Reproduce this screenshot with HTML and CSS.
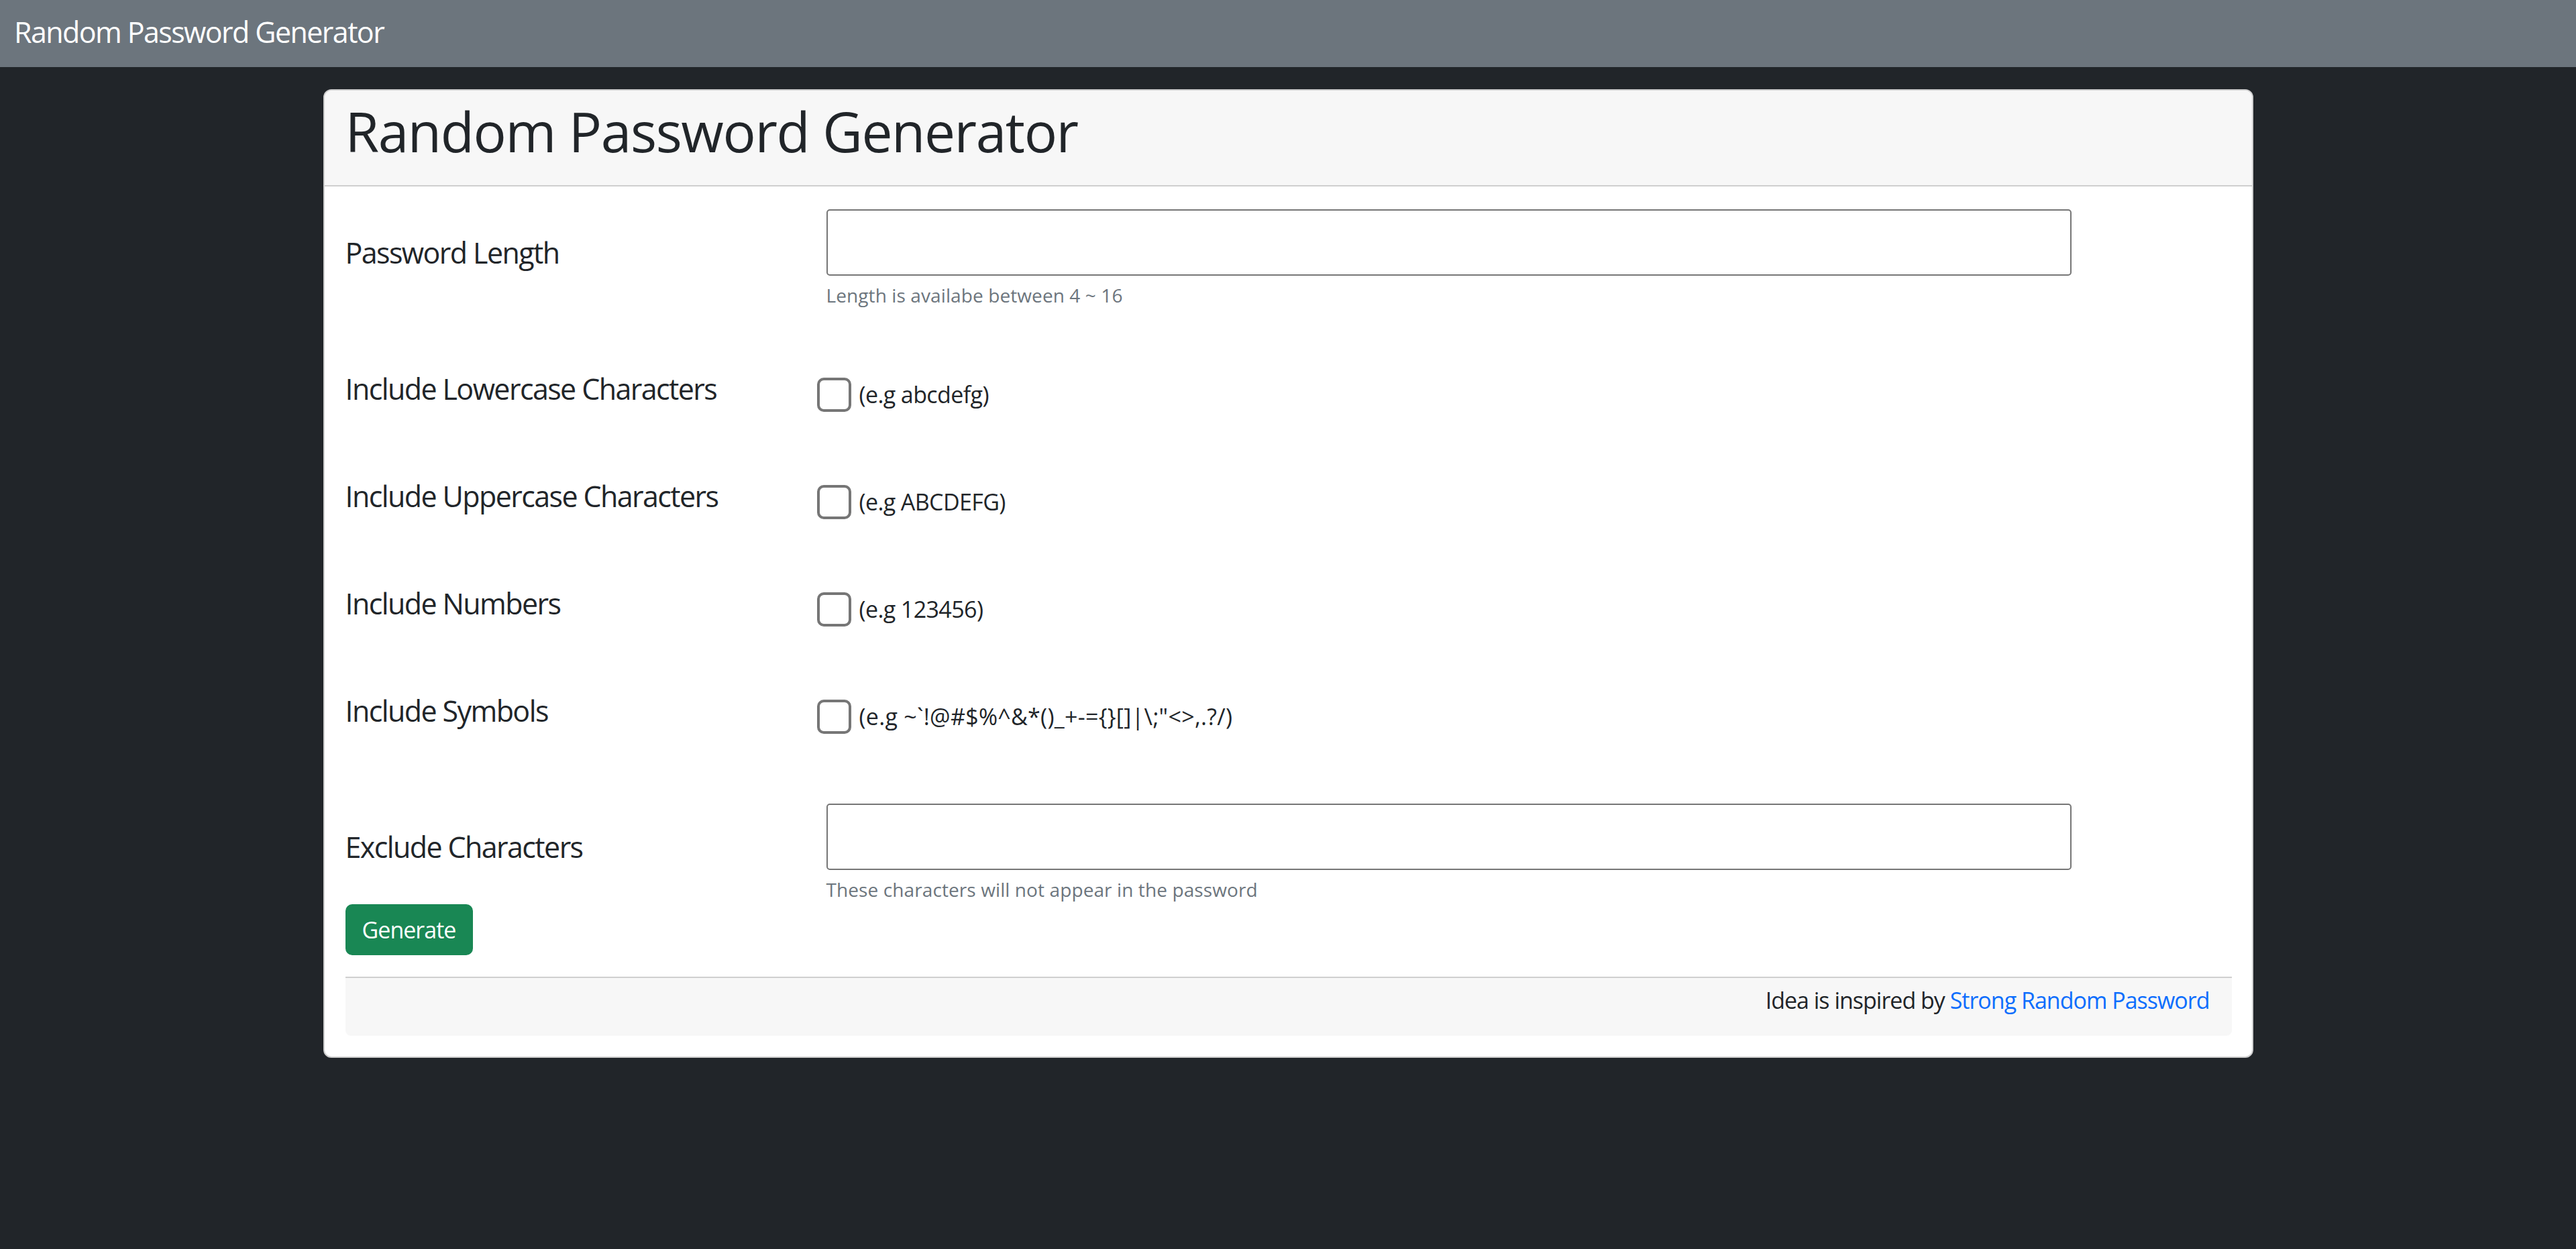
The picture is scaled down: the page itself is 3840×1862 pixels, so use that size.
FILE: index.html
```html
<!DOCTYPE html>
<html lang="en">
<head>
<meta charset="utf-8">
<title>Random Password Generator</title>
<link rel="stylesheet" href="styles.css">
</head>
<body>
<nav class="navbar">
  <span class="brand">Random Password Generator</span>
</nav>
<main class="page">
  <section class="card">
    <header class="card-header">
      <h1 class="title">Random Password Generator</h1>
    </header>
    <div class="card-body">
      <div class="row row-input">
        <label class="label" for="len">Password Length</label>
        <div class="control">
          <input class="text-input" id="len" type="text">
          <div class="help">Length is availabe between 4 ~ 16</div>
        </div>
      </div>

      <div class="row row-check first-check">
        <div class="label">Include Lowercase Characters</div>
        <label class="check-wrap"><input class="check" type="checkbox"><span class="check-text">(e.g abcdefg)</span></label>
      </div>
      <div class="row row-check">
        <div class="label">Include Uppercase Characters</div>
        <label class="check-wrap"><input class="check" type="checkbox"><span class="check-text">(e.g ABCDEFG)</span></label>
      </div>
      <div class="row row-check">
        <div class="label">Include Numbers</div>
        <label class="check-wrap"><input class="check" type="checkbox"><span class="check-text">(e.g 123456)</span></label>
      </div>
      <div class="row row-check">
        <div class="label">Include Symbols</div>
        <label class="check-wrap"><input class="check" type="checkbox"><span class="check-text check-text-symbols">(e.g ~`!@#$%^&amp;*()_+-={}[]|\;"&lt;&gt;,.?/)</span></label>
      </div>

      <div class="row row-input row-exclude">
        <label class="label" for="exc">Exclude Characters</label>
        <div class="control">
          <input class="text-input" id="exc" type="text">
          <div class="help">These characters will not appear in the password</div>
        </div>
      </div>

      <button class="btn" type="button">Generate</button>

      <footer class="card-footer">Idea is inspired by <a class="link" href="#">Strong Random Password</a></footer>
    </div>
  </section>
</main>
</body>
</html>
```

FILE: styles.css
```css
html, body {
  margin: 0;
  padding: 0;
}

body {
  background: #212529;
  font-family: "Open Sans", "Noto Sans", sans-serif;
  color: #212529;
}

.navbar {
  height: 100px;
  background: #6c757d;
}

.brand {
  display: block;
  padding-left: 21px;
  line-height: 96px;
  font-size: 43px;
  letter-spacing: -1.6px;
  color: #ffffff;
}

.page {
  padding-top: 33px;
}

.card {
  box-sizing: border-box;
  width: 2877px;
  margin: 0 auto;
  background: #ffffff;
  border: 2px solid #cfcfcf;
  border-radius: 12px;
  overflow: hidden;
}

.card-header {
  background: #f7f7f7;
  border-bottom: 2px solid #cfcfcf;
  padding: 11px 31px 32px;
}

.title {
  margin: 0;
  font-size: 82px;
  line-height: 98px;
  font-weight: 400;
  letter-spacing: -1.4px;
  color: #212529;
}

.card-body {
  padding: 0 30px 31px 31px;
}

.row {
  display: grid;
  grid-template-columns: 703px 1fr;
  align-items: start;
}

.label {
  display: block;
  font-size: 43px;
  line-height: 64px;
  letter-spacing: -1.6px;
  color: #212529;
}

.row-input {
  margin-top: 34px;
}

.row-input .label {
  padding-top: 33px;
}

.row-exclude {
  margin-top: 28px;
}

.control {
  padding-left: 14px;
}

.text-input {
  display: block;
  box-sizing: border-box;
  width: 1856px;
  height: 99px;
  margin: 0;
  border: 2px solid #767676;
  border-radius: 5px;
  background: #ffffff;
  font-family: inherit;
  font-size: 36px;
  padding: 0 20px;
}

.help {
  margin-top: 8px;
  font-size: 28px;
  line-height: 42px;
  letter-spacing: 0.1px;
  color: #6c757d;
}

.row-check {
  height: 160px;
}

.first-check {
  margin-top: 69px;
}

.row-check .label {
  margin-top: 18px;
}

.check-wrap {
  display: flex;
  align-items: center;
  height: 51px;
  margin-top: 33px;
}

.check {
  appearance: none;
  -webkit-appearance: none;
  box-sizing: border-box;
  width: 51px;
  height: 51px;
  margin: 0 12px 0 0;
  border: 4px solid #767676;
  border-radius: 10px;
  background: #ffffff;
}

.check-text {
  font-size: 34px;
  line-height: 51px;
  letter-spacing: -0.6px;
  color: #212529;
}

.check-text-symbols {
  letter-spacing: 0.3px;
}

.btn {
  display: block;
  box-sizing: border-box;
  width: 190px;
  height: 76px;
  margin-top: 1px;
  padding: 0;
  border: none;
  border-radius: 10px;
  background: #198754;
  color: #ffffff;
  font-family: inherit;
  font-size: 34px;
  line-height: 76px;
  letter-spacing: -1px;
}

.card-footer {
  margin-top: 32px;
  border-top: 2px solid #cfcfcf;
  background: #f7f7f7;
  border-radius: 0 0 8px 8px;
  padding: 8px 33px 27px;
  text-align: right;
  font-size: 34px;
  line-height: 51px;
  letter-spacing: -1px;
  color: #212529;
}

.link {
  color: #0d6efd;
  text-decoration: none;
}
```
